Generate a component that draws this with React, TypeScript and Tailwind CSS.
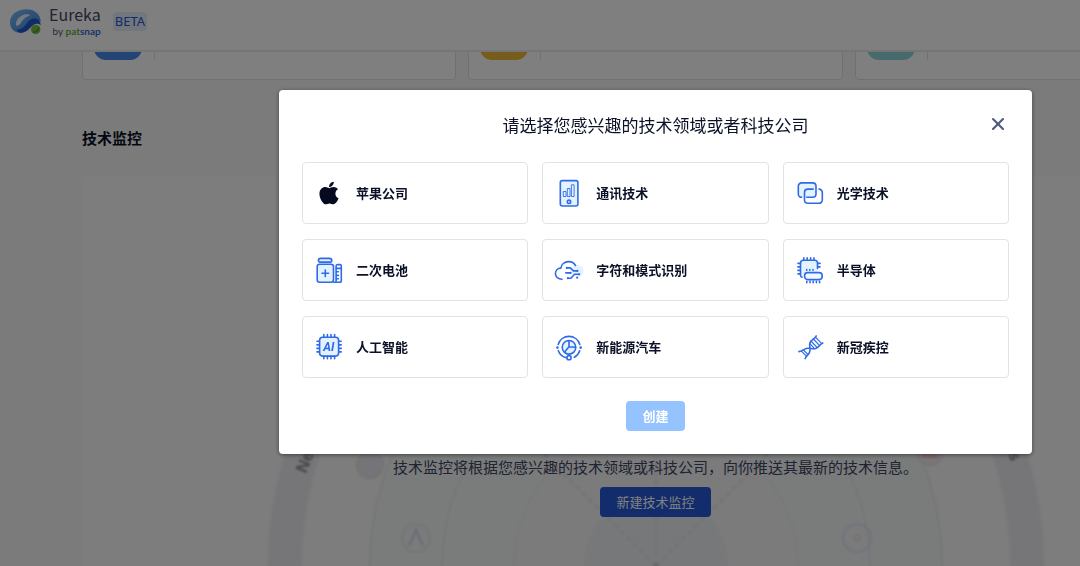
import { useState } from "react";
import type { ReactNode } from "react";
import { X } from "lucide-react";
import { FaApple } from "react-icons/fa";

const Icon = ({ children }: { children: ReactNode }) => (
    <svg
        viewBox="0 0 26 26"
        className="size-[26px] shrink-0 overflow-visible"
        fill="none"
        stroke="#2f6be6"
        strokeWidth="1.6"
        strokeLinecap="round"
        strokeLinejoin="round"
        aria-hidden="true"
    >
        {children}
    </svg>
);

const PhoneIcon = () => (
    <Icon>
        <rect x="4.3" y="0.6" width="17.6" height="25.4" rx="2" fill="#e4f1ff" />
        <g strokeWidth="0.9">
            <rect x="7.7" y="11.5" width="2.3" height="5" />
            <rect x="11.7" y="8.5" width="2.3" height="8" />
            <rect x="15.8" y="4.8" width="2.3" height="11.7" />
        </g>
        <circle cx="13" cy="21.8" r="1.7" />
    </Icon>
);

const OpticsIcon = () => (
    <Icon>
        <rect x="1.3" y="2.9" width="17.7" height="14.4" rx="3" fill="#e4f1ff" stroke="none" />
        <path d="M4.6 17.3a3.3 3.3 0 0 1-3.3-3.3V6.2a3.3 3.3 0 0 1 3.3-3.3h11.1A3.3 3.3 0 0 1 19 6.2V14a3.3 3.3 0 0 1-3.3 3.3H9.8" />
        <path d="M22 9.1a3.3 3.3 0 0 1 3.3 3.3V20a3.3 3.3 0 0 1-3.3 3.3H10.8A3.3 3.3 0 0 1 7.5 20v-7.6a3.3 3.3 0 0 1 3.3-3.3h5.4" />
    </Icon>
);

const BatteryIcon = () => (
    <Icon>
        <path d="M4.8 1.4h8.6c1.6 0 2.4 1.4 2.4 2.4 0 .9-.5 1.3-1.2 1.3h-11c-.7 0-1.2-.4-1.2-1.3 0-1 .8-2.4 2.4-2.4z" fill="#e4f1ff" />
        <rect x="1.2" y="7.2" width="16.3" height="18" rx="2.4" fill="#e4f1ff" />
        <path d="M9.3 13v6.600M6 16.3h6.600" />
        <path d="M20.1 11.4V9.2c0-.9.6-1.6 1.4-1.6H24c.8 0 1.3.7 1.3 1.6v14.2c0 1-.7 1.8-1.6 1.8h-6M20.1 11.4h5.2M20.1 11.4v13.8M20.4 14.8h2M20.4 18.4h2M20.4 21.8h2" />
    </Icon>
);

const CloudIcon = () => (
    <Icon>
        <circle cx="21.6" cy="13.8" r="6" fill="#e4f1ff" stroke="none" />
        <path d="M6 22.2C2.2 22.2-.6 19.8-.6 16.6c0-3 2.3-5.4 5.5-5.5.3-3.6 3.5-6.5 7.6-6.5 3.1 0 5.600 1.300 7 3.900" />
        <path d="M10.8 10.9h3.4l3.2 3h3.8M9.8 15.9h4.6M11.8 21.2h3.1l3.6-3.9H23" />
        <g fill="#2f6be6" stroke="none">
            <circle cx="10.8" cy="10.9" r="1.1" />
            <circle cx="14.6" cy="15.9" r="1.1" />
            <circle cx="21.4" cy="13.9" r="1.1" />
            <circle cx="23.2" cy="17.3" r="1.1" />
            <circle cx="11.9" cy="21.2" r="1.1" />
            <circle cx="21.2" cy="20.7" r="1.1" />
        </g>
    </Icon>
);

const ChipIcon = () => (
    <Icon>
        <rect x="4" y="3" width="17" height="16.5" rx="3" fill="#e4f1ff" stroke="none" />
        <path d="M5 20.2c-1-.3-1.5-1-1.5-2V6c0-1.6 1.2-2.8 2.8-2.8h11.4c1.6 0 2.8 1.2 2.8 2.8v5.4" />
        <path d="M6.8 3V.9M10.2 3V.9M13.6 3V.9M17 3V.9M3.4 6.4H1M3.4 9.9H1M3.4 13.4H1M3.4 16.9H1M20.7 6.4H23M20.7 9.9H23M9.7 12.6v.6M12.8 12.6v.6M16 12.6v.6M9.8 24.2v1.6M13 24.2v1.6M16.2 24.2v1.6M19.4 24.2v1.6M22.6 24.2v1.6" />
        <rect x="7.6" y="15.6" width="17.6" height="7" rx="3" fill="#f3f8ff" />
    </Icon>
);

const AiIcon = () => (
    <Icon>
        <rect x="3.6" y="3.2" width="19" height="18.9" rx="3" fill="#e4f1ff" />
        <path d="M7.8 3V.5M11.4 3V.5M15 3V.5M18.6 3V.5M7.8 22.4v2.3M11.4 22.4v2.3M15 22.4v2.3M18.6 22.4v2.3M3.3 7.3H1M3.3 10.9H1M3.3 14.4H1M3.3 17.9H1M23 7.3h2.2M23 10.9h2.2M23 14.4h2.2M23 17.9h2.2" />
        <text
            x="12.8"
            y="17"
            textAnchor="middle"
            fill="#2f6be6"
            stroke="none"
            fontSize="12"
            fontStyle="italic"
            fontWeight="700"
            fontFamily="Roboto, sans-serif"
        >
            AI
        </text>
    </Icon>
);

const CarIcon = () => (
    <Icon>
        <circle cx="13" cy="13.3" r="6.8" fill="#e4f1ff" />
        <path d="M2.2 10.4a11.3 11.3 0 0 1 21.6 0M2.3 16.7a11.3 11.3 0 0 0 8.2 7M23.7 16.7a11.3 11.3 0 0 1-5.4 6.6" />
        <path d="M13 6.7v6l6.4.5M13 12.7l-4.2 5.1" />
        <circle cx="13" cy="23.7" r="2.1" />
        <circle cx="1.4" cy="13.6" r="1.3" fill="#2f6be6" stroke="none" />
        <circle cx="24.7" cy="13.6" r="1.3" fill="#2f6be6" stroke="none" />
    </Icon>
);

const DnaIcon = () => (
    <Icon>
        <path d="M19.2 1.9c-1 3-5.2 3.4-6.3 7-1 3.6 1.2 6-.4 9.4-1.3 2.7-3.5 3.5-4.3 6.3" />
        <path d="M25.8 9c-3 1-3.4 4.4-7.1 5.5-3.5 1-6-1-9.5.1-3.3 1-4 2.6-7.3 3" />
        <path d="M18.6 3.4l6 6M16.2 5l6.3 6.3M14 7l6 6.4M12.9 9.7l3.9 4.2M6.4 16l4.7 4.6M4.4 17.2l5 5" strokeWidth="1.2" />
    </Icon>
);

const topics = [
    { name: "苹果公司", icon: <FaApple className="size-[26px] shrink-0 text-[#050a1e]" /> },
    { name: "通讯技术", icon: <PhoneIcon /> },
    { name: "光学技术", icon: <OpticsIcon /> },
    { name: "二次电池", icon: <BatteryIcon /> },
    { name: "字符和模式识别", icon: <CloudIcon /> },
    { name: "半导体", icon: <ChipIcon /> },
    { name: "人工智能", icon: <AiIcon /> },
    { name: "新能源汽车", icon: <CarIcon /> },
    { name: "新冠疾控", icon: <DnaIcon /> },
];

const tiles = ["bg-[#4688e8]", "bg-[#f0b93a]", "bg-[#8fd6da]"];

function Header() {
    return (
        <header className="fixed inset-x-0 top-0 z-10 flex h-[52px] items-start border-b-2 border-[#e9eaec] bg-white pl-2.5">
            <svg viewBox="0 0 31 26" className="mt-[9px] h-[26px] w-[31px]" aria-hidden="true">
                <defs>
                    <linearGradient id="swoosh" x1="0" y1="0" x2="1" y2="1">
                        <stop offset="0" stopColor="#7dbcf5" />
                        <stop offset="1" stopColor="#3d83e6" />
                    </linearGradient>
                </defs>
                <path d="M0 13.5C0 5.5 7.5.3 16.5.3 24.5.3 30.600 5 30.800 13.200c-3-2-6.800-1.300-9.500 1.800-3 4-6 8.800-11.300 8.800C4 23.800 0 19.300 0 13.500z" fill="url(#swoosh)" />
                <path d="M6.500 20.500c6 .3 8.500-3.500 11-7.200 2.600-3.800 8-5.300 11.300-1.900 1.200 1.300 1.900 3 2 4.600-3.800-2.600-6.800-1-9.200 1.500C18 21.400 15 23.900 10.500 23.800c-1.600 0-3-1-4-3.300z" fill="#2159cf" />
                <path d="M5.800 15.300C6 10.200 10.500 6 15.800 5.300c2.600-.3 4.400.3 3.900 1.300-2.200.7-4.600 1.900-6.600 4.200-2 2.400-3 5.400-5.200 5.900-1.300.2-2.100-.3-2.100-1.400z" fill="#eef4fb" />
                <circle cx="25.700" cy="20.500" r="4.700" fill="#79c143" />
                <path d="M21.500 22.600c3 .6 6-1.400 7.300-5.600a4.700 4.700 0 0 1-7.300 5.600z" fill="#579c35" />
            </svg>
            <div className="ml-2 mt-1 flex flex-col items-end">
                <span className="text-base leading-5 text-[#3f4765]">Eureka</span>
                <span className="font-['Lato',sans-serif] text-[10px] leading-[14px] text-[#4f5873]">
                    by <b className="text-[#67ae3c]">pat</b>
                    <b className="text-[#356fd6]">snap</b>
                </span>
            </div>
            <span className="ml-3 mt-3 rounded-sm bg-[#e4eefc] px-0.5 font-['Noto_Sans',sans-serif] text-[13px] leading-[19px] text-[#2458d0]">
                BETA
            </span>
        </header>
    );
}

function Radar() {
    return (
        <svg
            viewBox="0 0 778 778"
            className="absolute left-1/2 top-px size-[778px] -translate-x-1/2 blur-[1px]"
            fill="none"
            aria-hidden="true"
        >
            <circle cx="389" cy="389" r="371" stroke="#ecedf1" strokeWidth="34" />
            <circle cx="389" cy="389" r="286" fill="#f5f7f7" stroke="#ebecf0" strokeWidth="2" />
            <circle cx="389" cy="389" r="214" fill="#f5f7f7" stroke="#ebecf0" strokeWidth="2" />
            <circle cx="389" cy="389" r="142" fill="#f6f6f8" stroke="#f0f1f4" strokeWidth="2" />
            <circle cx="389" cy="389" r="72" fill="#eff0f3" />
            <path d="M389 389V106M389 389L189 189M389 389l200-200" stroke="#e1e3ea" strokeWidth="2" strokeDasharray="5 4" />
            <circle cx="389" cy="389" r="3" fill="#cfd2de" />
            <g strokeWidth="2">
                <circle cx="103" cy="288" r="13" fill="#e9ebf0" stroke="#ece3dc" />
                <circle cx="149" cy="361" r="14" stroke="#e4ebe2" />
                <path d="M142 369l7-16 7 16" stroke="#dcdcf0" strokeWidth="3" />
                <circle cx="590" cy="361" r="14" stroke="#e2e4f4" />
                <circle cx="590" cy="361" r="3" stroke="#eae6dc" />
                <circle cx="663" cy="275" r="13" fill="#f6eeee" stroke="#e6e2f0" />
                <path d="M653 275h20M655 279h16" stroke="#f2cccc" strokeWidth="4" />
            </g>
            <g fill="#8a8a90" fontSize="17" fontWeight="700" fontFamily="'Liberation Sans', sans-serif">
                <text transform="translate(39 297) rotate(-68)">New</text>
                <text transform="translate(741 276) rotate(72)">s</text>
            </g>
        </svg>
    );
}

function TopicDialog({ onClose }: { onClose: () => void }) {
    const [selected, setSelected] = useState<string[]>([]);

    const toggle = (name: string) =>
        setSelected((prev) =>
            prev.includes(name) ? prev.filter((n) => n !== name) : [...prev, name]
        );

    return (
        <div className="absolute inset-0 z-20 flex items-start justify-center bg-black/50 pt-[90px]">
            <section
                role="dialog"
                aria-labelledby="dialog-title"
                className="relative flex w-[753px] flex-col items-center rounded bg-white px-[23px] py-[23px] shadow-[0_1px_4px_rgba(0,0,0,0.45)]"
            >
                <h1 id="dialog-title" className="text-[17px] leading-6 text-[#0b1126]">
                    请选择您感兴趣的技术领域或者科技公司
                </h1>
                <button
                    type="button"
                    aria-label="关闭"
                    onClick={onClose}
                    className="absolute right-6 top-6 text-[#4f5b7c]"
                >
                    <X className="size-5" strokeWidth={2.5} />
                </button>
                <div className="mt-[25px] grid w-full grid-cols-3 gap-x-3.5 gap-y-[15px]">
                    {topics.map(({ name, icon }) => (
                        <button
                            key={name}
                            type="button"
                            aria-pressed={selected.includes(name)}
                            onClick={() => toggle(name)}
                            className="flex h-[62px] items-center gap-3.5 rounded border border-[#e1e3e8] px-[13px] text-[13px] font-bold text-[#0b1126] aria-pressed:border-[#2f6be6]"
                        >
                            {icon}
                            {name}
                        </button>
                    ))}
                </div>
                <button
                    type="button"
                    disabled={selected.length === 0}
                    className="mt-[23px] h-[30px] rounded bg-[#2f6be6] px-4 text-[13px] font-bold text-white disabled:bg-[#94c3ff]"
                >
                    创建
                </button>
            </section>
        </div>
    );
}

export default function App() {
    const [open, setOpen] = useState(true);

    return (
        <div className="h-screen overflow-hidden bg-[#f7f7f8] font-['Noto_Sans_CJK_SC',sans-serif]">
            <div className="relative h-full min-w-[1311px] overflow-hidden">
                <Header />
                <main className="px-[82px]">
                    <div className="grid grid-cols-3 gap-3">
                        {tiles.map((color) => (
                            <div
                                key={color}
                                className="flex gap-3 rounded border border-[#e0e1e5] bg-white px-[11px] pb-[19px] pt-[11px]"
                            >
                                <div className={`size-12 rounded-xl ${color}`} />
                                <div className="w-px bg-[#dfe1e6]" />
                            </div>
                        ))}
                    </div>
                    <h2 className="mt-12 text-[15px] font-bold leading-5 text-[#0b1126]">技术监控</h2>
                    <section className="relative mt-7 flex min-h-[780px] flex-col items-center overflow-hidden rounded-md bg-[#fafafa] pt-[281px]">
                        <Radar />
                        <p className="relative text-[15px] leading-5 text-[#3f4765]">
                            技术监控将根据您感兴趣的技术领域或科技公司，向你推送其最新的技术信息。
                        </p>
                        <button
                            type="button"
                            onClick={() => setOpen(true)}
                            className="relative mt-2.5 h-[30px] rounded bg-[#2459d8] px-4 text-[13px] text-white"
                        >
                            新建技术监控
                        </button>
                    </section>
                </main>
                {open && <TopicDialog onClose={() => setOpen(false)} />}
            </div>
        </div>
    );
}
